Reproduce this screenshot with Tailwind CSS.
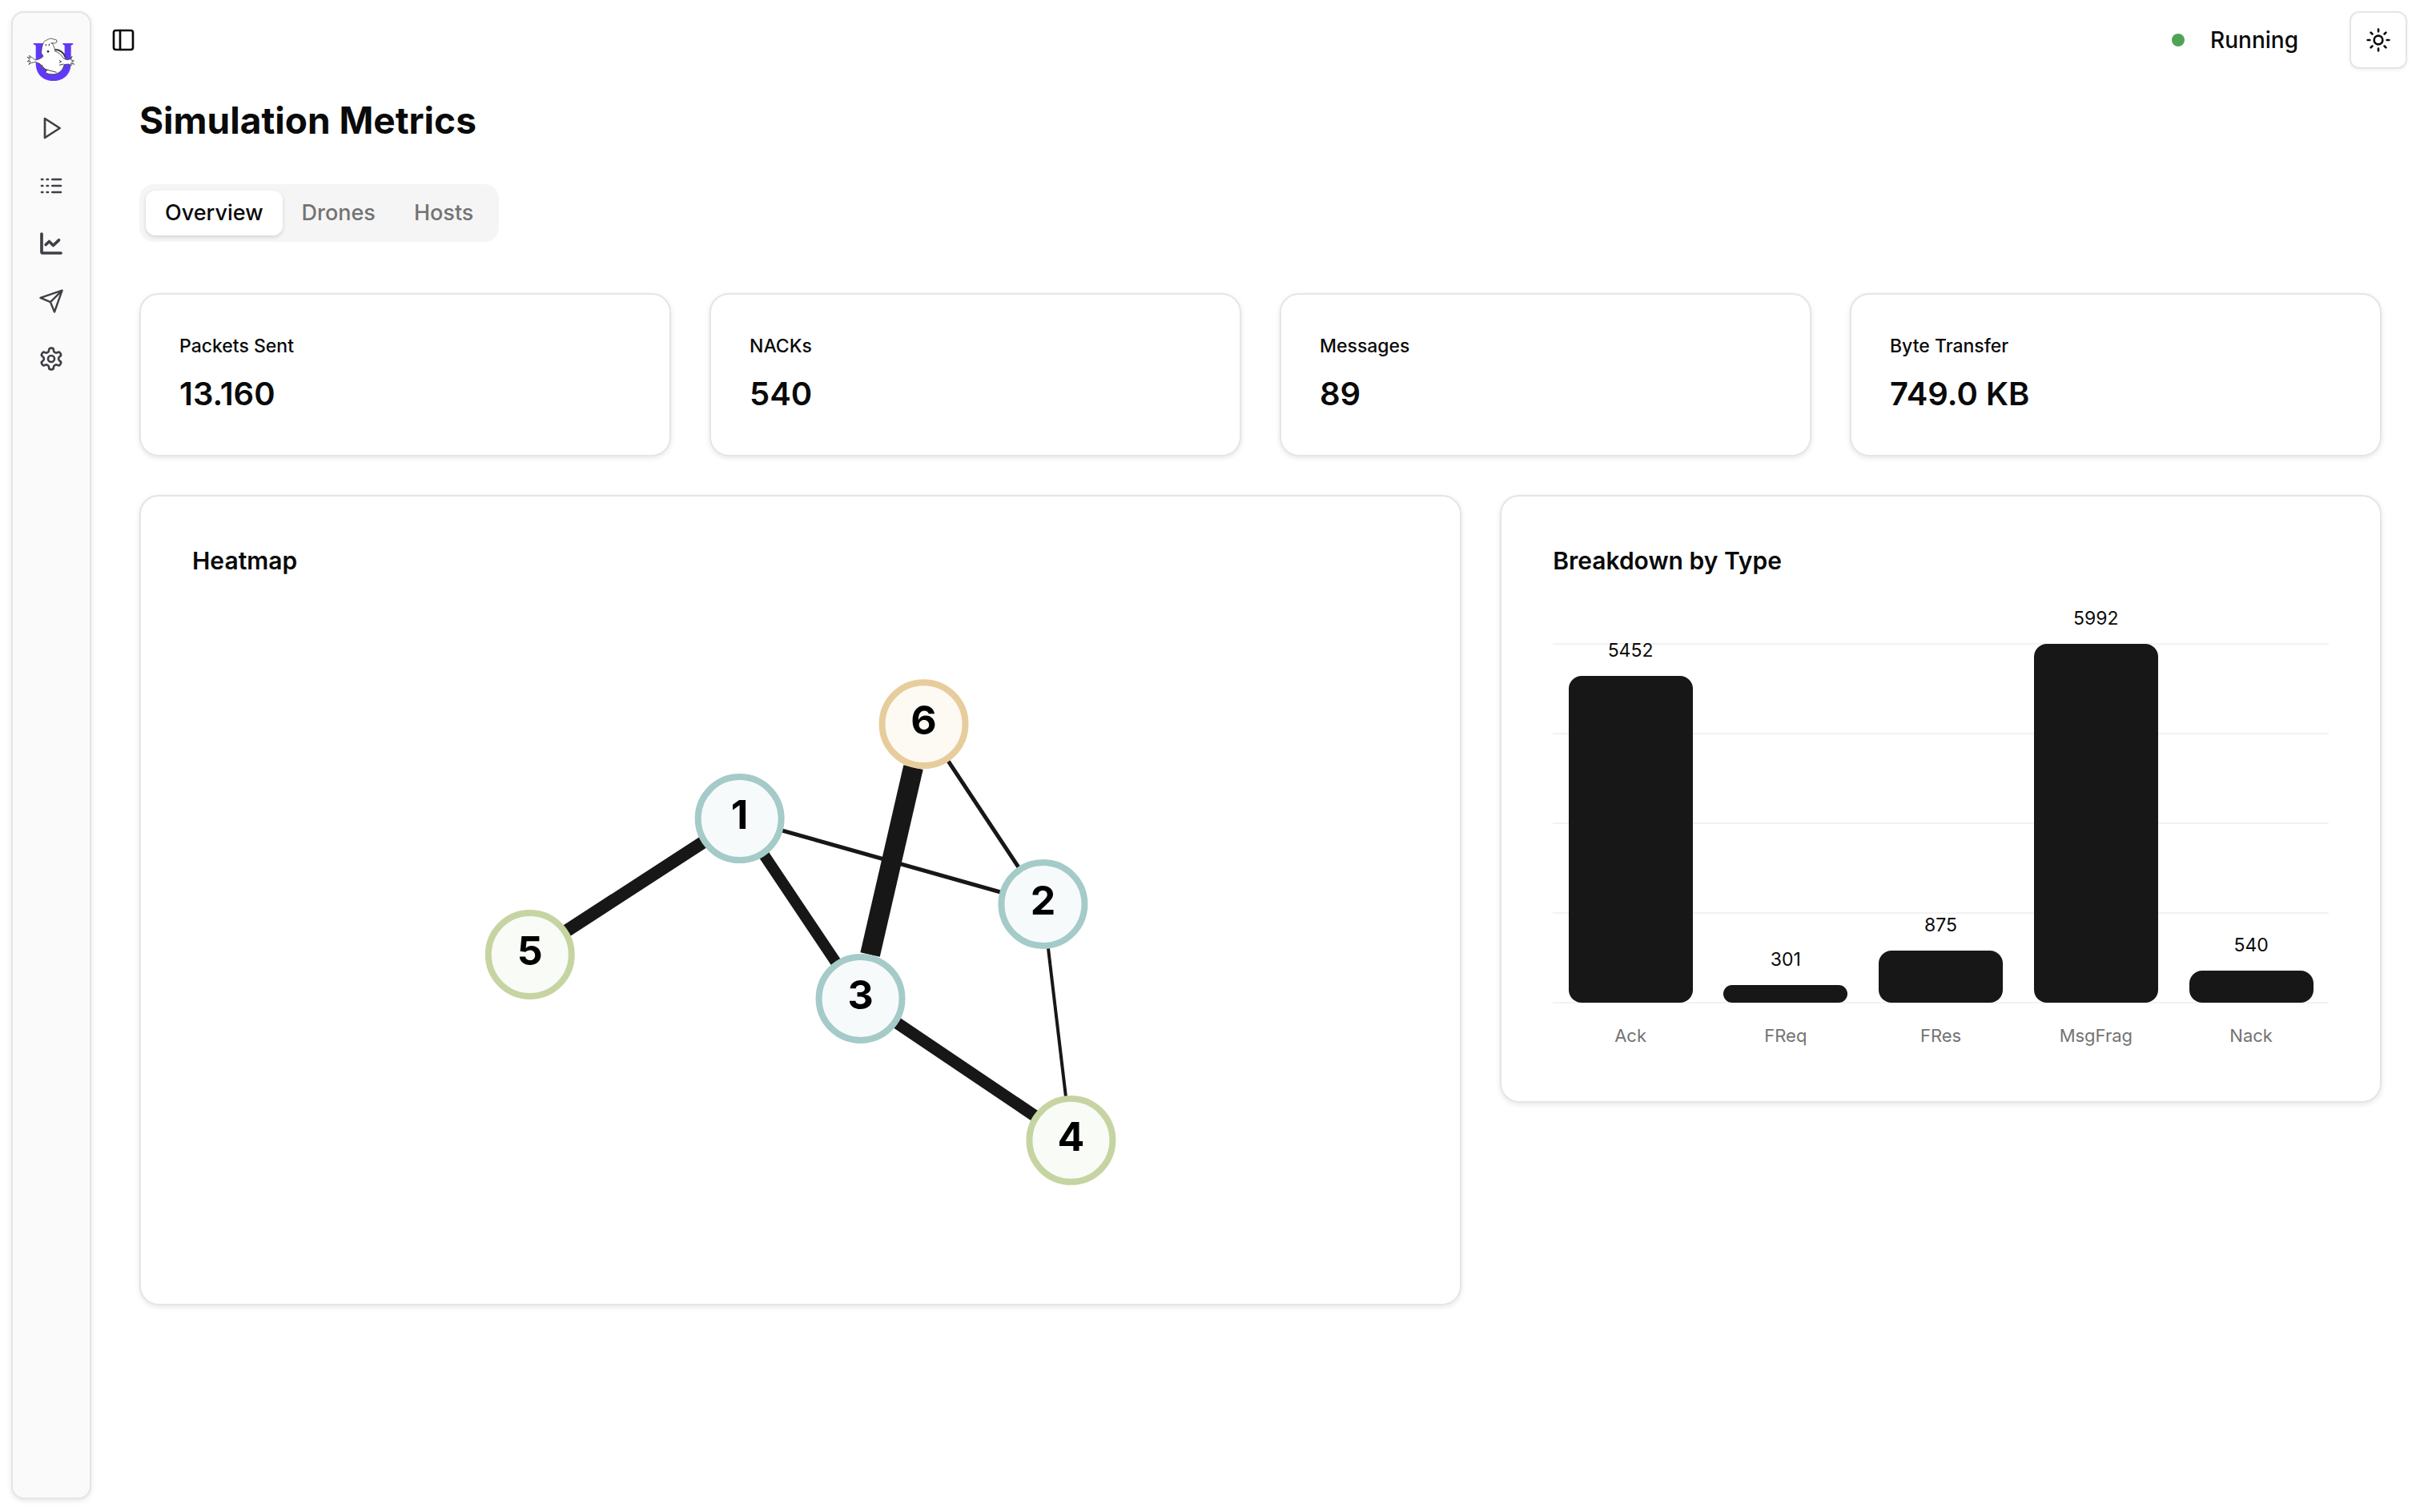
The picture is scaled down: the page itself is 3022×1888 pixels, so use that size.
<!DOCTYPE html>
<html lang="en">
<head>
<meta charset="utf-8">
<meta name="viewport" content="width=device-width, initial-scale=1">
<title>Simulation Metrics</title>
<script src="https://cdn.jsdelivr.net/npm/@tailwindcss/browser@4"></script>
</head>
<body class="bg-white font-['Inter',sans-serif] text-neutral-950">
<div class="flex min-h-screen pl-[14px]">

  <!-- Collapsed sidebar -->
  <aside class="mt-[14px] mb-4 flex w-[100px] shrink-0 flex-col items-center rounded-2xl border-2 border-[#e4e4e9] bg-[#fafafa] pt-6 shadow-[0_2px_6px_rgba(0,0,0,0.1)]">
    <a href="#" aria-label="Home" class="block">
      <svg viewBox="0 0 240 210" class="h-[70px] w-20" aria-hidden="true">
        <path d="M53 42H100V90C98 130 108 146 128 146S158 130 170 100V50L163 46V42H202V46L194 50V116C194 158 166 183 128 183S62 158 62 116V50L53 46Z" fill="#6039f8"/>
        <path d="M134 66C152 66 166 77 173 94" fill="none" stroke="#3c3c3c" stroke-width="6"/>
        <path d="M82 78C84 66 85 55 87 50C92 37 96 31 104 30C110 26 116 23 122 25C128 28 134 27 140 30L141 38L133 42L124 41C128 52 134 60 134 72C148 76 158 86 166 99L178 104L190 102L198 91L193 104L205 108L196 111L206 121L193 117L196 125L184 120L168 122C166 140 150 156 131 158C116 160 98 154 99 150L104 142C92 138 84 130 78 119L60 112L44 116L36 122L42 110L30 110L40 104L30 94L42 98L37 88L50 97L60 105C72 104 84 98 90 91Z" fill="#fff" stroke="#3c3c3c" stroke-width="2.500" stroke-linejoin="round"/>
        <path d="M150 106L158 111L150 115M150 124L166 120M102 141L140 151M84 122C88 132 96 140 104 142M118 41L125 43" fill="none" stroke="#3c3c3c" stroke-width="3"/>
        <path d="M100 45v7M112 44v8" stroke="#222" stroke-width="3"/>
        <circle cx="108" cy="73" r="4" fill="#222"/>
      </svg>
    </a>
    <nav aria-label="Main" class="mt-[18px] flex flex-col gap-2 text-[#3f3f46]">
      <a href="#" aria-label="Run" class="grid size-16 place-items-center">
        <svg class="size-8" viewBox="0 0 24 24" fill="none" stroke="currentColor" stroke-width="2" stroke-linecap="round" stroke-linejoin="round"><path d="M6 3L20 12L6 21Z"/></svg>
      </a>
      <a href="#" aria-label="Logs" class="grid size-16 place-items-center">
        <svg class="size-8" viewBox="0 0 24 24" fill="none" stroke="currentColor" stroke-width="2" stroke-linecap="round" stroke-linejoin="round"><path d="M13 12h8M13 18h8M13 6h8M3 12h1M3 18h1M3 6h1M8 12h1M8 18h1M8 6h1"/></svg>
      </a>
      <a href="#" aria-label="Metrics" aria-current="page" class="grid size-16 place-items-center">
        <svg class="size-8" viewBox="0 0 32 32" fill="none" stroke="currentColor" stroke-width="3.700" stroke-linecap="round" stroke-linejoin="round"><path d="M4 4V26.500Q4 28 5.500 28H28M9.200 17.500L13.400 13.500L18.500 18.500L25.500 11.800"/></svg>
      </a>
      <a href="#" aria-label="Messages" class="grid size-16 place-items-center">
        <svg class="size-8" viewBox="0 0 32 32" fill="none" stroke="currentColor" stroke-width="2.400" stroke-linecap="round" stroke-linejoin="round"><path d="M29.600 2.600L2.500 11.800L15 17.200L20 29.500ZM29.600 2.600L15 17.200"/></svg>
      </a>
      <a href="#" aria-label="Settings" class="grid size-16 place-items-center">
        <svg class="size-8" viewBox="0 0 24 24" fill="none" stroke="currentColor" stroke-width="2" stroke-linecap="round" stroke-linejoin="round"><path d="M12.220 2h-.44a2 2 0 0 0-2 2v.18a2 2 0 0 1-1 1.730l-.43.25a2 2 0 0 1-2 0l-.15-.08a2 2 0 0 0-2.730.73l-.22.38a2 2 0 0 0 .73 2.730l.15.1a2 2 0 0 1 1 1.720v.51a2 2 0 0 1-1 1.740l-.15.09a2 2 0 0 0-.73 2.730l.22.38a2 2 0 0 0 2.730.73l.15-.08a2 2 0 0 1 2 0l.43.25a2 2 0 0 1 1 1.730V20a2 2 0 0 0 2 2h.44a2 2 0 0 0 2-2v-.18a2 2 0 0 1 1-1.730l.43-.25a2 2 0 0 1 2 0l.15.08a2 2 0 0 0 2.730-.73l.22-.39a2 2 0 0 0-.73-2.730l-.15-.08a2 2 0 0 1-1-1.740v-.5a2 2 0 0 1 1-1.740l.15-.09a2 2 0 0 0 .73-2.730l-.22-.38a2 2 0 0 0-2.730-.73l-.15.08a2 2 0 0 1-2 0l-.43-.25a2 2 0 0 1-1-1.730V4a2 2 0 0 0-2-2z"/><circle cx="12" cy="12" r="3"/></svg>
      </a>
    </nav>
  </aside>

  <div class="min-w-0 flex-1">
    <header class="mt-[14px] flex h-[72px] items-center justify-between pr-4 pl-6">
      <button type="button" aria-label="Toggle sidebar" class="size-8">
        <svg class="size-8" viewBox="0 0 24 24" fill="none" stroke="currentColor" stroke-width="2" stroke-linecap="round" stroke-linejoin="round"><rect x="3" y="3" width="18" height="18" rx="2"/><path d="M9 3v18"/></svg>
      </button>
      <div class="flex items-center">
        <span class="size-4 rounded-full bg-[#4fa356]"></span>
        <span class="ml-8 text-[28px] leading-10 font-medium">Running</span>
        <button type="button" aria-label="Toggle theme" class="ml-16 grid size-[72px] place-items-center rounded-xl border-2 border-neutral-200 bg-white shadow-[0_2px_4px_rgba(0,0,0,0.05)]">
          <svg class="size-8" viewBox="0 0 24 24" fill="none" stroke="currentColor" stroke-width="2" stroke-linecap="round" stroke-linejoin="round"><circle cx="12" cy="12" r="4"/><path d="M12 2v2M12 20v2M4.930 4.930l1.410 1.410M17.660 17.660l1.410 1.410M2 12h2M20 12h2M6.340 17.660l-1.410 1.410M19.070 4.930l-1.410 1.410"/></svg>
        </button>
      </div>
    </header>

    <main class="px-12 pt-[34px] pb-12 pl-[60px]">
      <h1 class="text-[46px] leading-[60px] font-bold">Simulation Metrics</h1>

      <div role="tablist" class="mt-[50px] inline-flex h-[72px] items-center rounded-[18px] bg-neutral-100 p-2 align-top text-[27px] font-medium">
        <button type="button" role="tab" aria-selected="true" class="h-14 rounded-xl bg-white px-6 shadow-[0_2px_5px_rgba(0,0,0,0.14)]">Overview</button>
        <button type="button" role="tab" aria-selected="false" class="h-14 rounded-xl px-6 text-neutral-500">Drones</button>
        <button type="button" role="tab" aria-selected="false" class="h-14 rounded-xl px-6 text-neutral-500">Hosts</button>
      </div>

      <!-- Totals -->
      <dl class="mt-16 grid grid-cols-4 gap-12">
        <div class="rounded-3xl border-2 border-neutral-200 p-12 shadow-[0_2px_6px_rgba(0,0,0,0.1)]">
          <dt class="text-[23px] leading-8 font-medium">Packets Sent</dt>
          <dd class="mt-4 text-[40px] leading-[56px] font-semibold">13.160</dd>
        </div>
        <div class="rounded-3xl border-2 border-neutral-200 p-12 shadow-[0_2px_6px_rgba(0,0,0,0.1)]">
          <dt class="text-[23px] leading-8 font-medium">NACKs</dt>
          <dd class="mt-4 text-[40px] leading-[56px] font-semibold">540</dd>
        </div>
        <div class="rounded-3xl border-2 border-neutral-200 p-12 shadow-[0_2px_6px_rgba(0,0,0,0.1)]">
          <dt class="text-[23px] leading-8 font-medium">Messages</dt>
          <dd class="mt-4 text-[40px] leading-[56px] font-semibold">89</dd>
        </div>
        <div class="rounded-3xl border-2 border-neutral-200 p-12 shadow-[0_2px_6px_rgba(0,0,0,0.1)]">
          <dt class="text-[23px] leading-8 font-medium">Byte Transfer</dt>
          <dd class="mt-4 text-[40px] leading-[56px] font-semibold">749.0 KB</dd>
        </div>
      </dl>

      <div class="mt-12 grid grid-cols-[3fr_2fr] items-start gap-12">
        <!-- Network traffic between nodes -->
        <section class="rounded-3xl border-2 border-neutral-200 p-16 shadow-[0_2px_6px_rgba(0,0,0,0.1)]">
          <h2 class="text-[30px] leading-8 font-semibold">Heatmap</h2>
          <svg viewBox="0 0 1520 848" class="block h-[848px] w-full" role="img" aria-label="Traffic between nodes 1 to 6">
            <g stroke="#171717">
              <path d="M684 306L422 476" stroke-width="16"/>
              <path d="M684 306L834 530" stroke-width="14"/>
              <path d="M684 306L1063 413" stroke-width="5"/>
              <path d="M914 188L1063 413" stroke-width="5"/>
              <path d="M1063 413L1098 708" stroke-width="4"/>
              <path d="M834 530L1098 708" stroke-width="15"/>
              <path d="M901 242L847 476" stroke-width="25"/>
            </g>
            <g stroke-width="8">
              <g fill="#f7fafb" stroke="#a4cbc8"><circle cx="684" cy="306" r="52"/><circle cx="1063" cy="413" r="52"/><circle cx="835" cy="531" r="52"/></g>
              <g fill="#f9fbf6" stroke="#c6d4a2"><circle cx="1098" cy="708" r="52"/><circle cx="422" cy="476" r="52"/></g>
              <circle cx="914" cy="188" r="52" fill="#fdfaf4" stroke="#e7cd9c"/>
            </g>
            <g class="text-[50px] font-bold" text-anchor="middle" fill="#000">
              <text x="684" y="319">1</text>
              <text x="1063" y="426">2</text>
              <text x="835" y="544">3</text>
              <text x="1098" y="721">4</text>
              <text x="422" y="489">5</text>
              <text x="914" y="201">6</text>
            </g>
          </svg>
        </section>

        <!-- Packet counts by type -->
        <section class="rounded-3xl border-2 border-neutral-200 p-16 shadow-[0_2px_6px_rgba(0,0,0,0.1)]">
          <h2 class="text-[30px] leading-8 font-semibold">Breakdown by Type</h2>
          <div class="relative mt-[87px] h-[450px]">
            <div class="absolute inset-0 flex flex-col justify-between">
              <div class="h-0.5 bg-[#f2f2f2]"></div>
              <div class="h-0.5 bg-[#f2f2f2]"></div>
              <div class="h-0.5 bg-[#f2f2f2]"></div>
              <div class="h-0.5 bg-[#f2f2f2]"></div>
              <div class="h-0.5 bg-[#f2f2f2]"></div>
            </div>
            <div class="relative grid h-[449px] grid-cols-5 pt-px text-center text-[23px] leading-8">
              <div class="flex h-full flex-col items-center justify-end"><span class="mb-4">5452</span><div class="w-4/5 shrink-0 rounded-2xl bg-neutral-900" style="height:91%"></div></div>
              <div class="flex h-full flex-col items-center justify-end"><span class="mb-4">301</span><div class="w-4/5 shrink-0 rounded-2xl bg-neutral-900" style="height:5%"></div></div>
              <div class="flex h-full flex-col items-center justify-end"><span class="mb-4">875</span><div class="w-4/5 shrink-0 rounded-2xl bg-neutral-900" style="height:14.600%"></div></div>
              <div class="flex h-full flex-col items-center justify-end"><span class="mb-4">5992</span><div class="w-4/5 shrink-0 rounded-2xl bg-neutral-900" style="height:100%"></div></div>
              <div class="flex h-full flex-col items-center justify-end"><span class="mb-4">540</span><div class="w-4/5 shrink-0 rounded-2xl bg-neutral-900" style="height:9%"></div></div>
            </div>
          </div>
          <div class="mt-6 mb-0.5 grid grid-cols-5 text-center text-[22px] leading-8 text-neutral-500">
            <span>Ack</span><span>FReq</span><span>FRes</span><span>MsgFrag</span><span>Nack</span>
          </div>
        </section>
      </div>
    </main>
  </div>
</div>
</body>
</html>
